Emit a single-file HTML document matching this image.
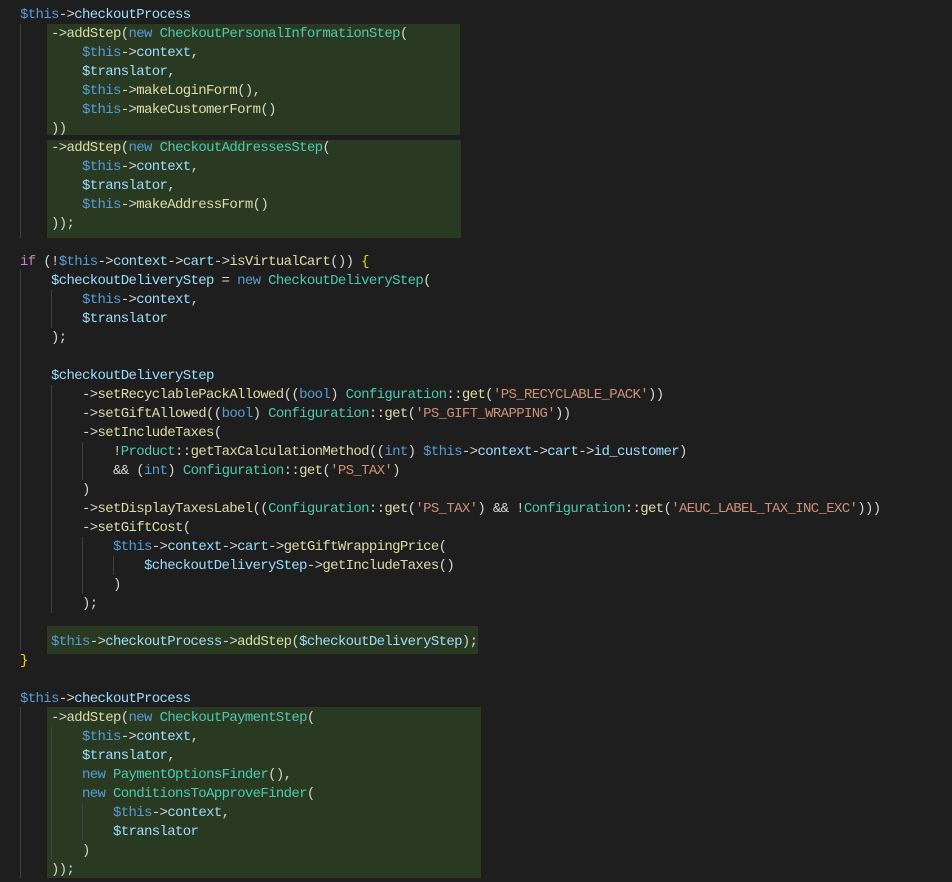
<!DOCTYPE html>
<html><head><meta charset="utf-8"><style>
html,body{margin:0;padding:0;background:#1e1e1e;width:952px;height:882px;overflow:hidden}
#c{position:absolute;left:20px;top:6px;font-family:"Liberation Mono",monospace;font-size:14px;letter-spacing:-0.65px;line-height:19px;color:#d4d4d4;white-space:pre}
.l{height:19px}
.hl{position:absolute;background:#2a3a22}
.g{position:absolute;width:1px;background:#404040}
.v{color:#569cd6}.k{color:#569cd6}.p{color:#9cdcfe}.f{color:#dcdcaa}.t{color:#4ec9b0}.s{color:#ce9178}.i{color:#c586c0}.y{color:#ffd700}
</style></head><body>
<div class="hl" style="left:47px;top:24px;width:413px;height:111px"></div>
<div class="hl" style="left:47px;top:140px;width:414px;height:98px"></div>
<div class="hl" style="left:47px;top:626px;width:431px;height:28px"></div>
<div class="hl" style="left:47px;top:707px;width:434px;height:171px"></div>
<div class="g" style="left:20px;top:24px;height:214px"></div>
<div class="g" style="left:20px;top:270px;height:380px"></div>
<div class="g" style="left:20px;top:707px;height:171px"></div>
<div class="g" style="left:51px;top:290px;height:38px"></div>
<div class="g" style="left:51px;top:385px;height:228px"></div>
<div class="g" style="left:51px;top:727px;height:133px"></div>
<div class="g" style="left:82px;top:442px;height:38px"></div>
<div class="g" style="left:82px;top:537px;height:57px"></div>
<div class="g" style="left:113px;top:556px;height:19px"></div>
<div class="g" style="left:82px;top:803px;height:38px"></div>
<div id="c"><div class="l"><span class="v">$this</span>-&gt;<span class="p">checkoutProcess</span></div><div class="l">    -&gt;<span class="f">addStep</span>(<span class="k">new</span> <span class="t">CheckoutPersonalInformationStep</span>(</div><div class="l">        <span class="v">$this</span>-&gt;<span class="p">context</span>,</div><div class="l">        <span class="p">$translator</span>,</div><div class="l">        <span class="v">$this</span>-&gt;<span class="f">makeLoginForm</span>(),</div><div class="l">        <span class="v">$this</span>-&gt;<span class="f">makeCustomerForm</span>()</div><div class="l">    ))</div><div class="l">    -&gt;<span class="f">addStep</span>(<span class="k">new</span> <span class="t">CheckoutAddressesStep</span>(</div><div class="l">        <span class="v">$this</span>-&gt;<span class="p">context</span>,</div><div class="l">        <span class="p">$translator</span>,</div><div class="l">        <span class="v">$this</span>-&gt;<span class="f">makeAddressForm</span>()</div><div class="l">    ));</div><div class="l"> </div><div class="l"><span class="i">if</span> (!<span class="v">$this</span>-&gt;<span class="p">context</span>-&gt;<span class="p">cart</span>-&gt;<span class="f">isVirtualCart</span>()) <span class="y">{</span></div><div class="l">    <span class="p">$checkoutDeliveryStep</span> = <span class="k">new</span> <span class="t">CheckoutDeliveryStep</span>(</div><div class="l">        <span class="v">$this</span>-&gt;<span class="p">context</span>,</div><div class="l">        <span class="p">$translator</span></div><div class="l">    );</div><div class="l"> </div><div class="l">    <span class="p">$checkoutDeliveryStep</span></div><div class="l">        -&gt;<span class="f">setRecyclablePackAllowed</span>((<span class="k">bool</span>) <span class="t">Configuration</span>::<span class="f">get</span>(<span class="s">'PS_RECYCLABLE_PACK'</span>))</div><div class="l">        -&gt;<span class="f">setGiftAllowed</span>((<span class="k">bool</span>) <span class="t">Configuration</span>::<span class="f">get</span>(<span class="s">'PS_GIFT_WRAPPING'</span>))</div><div class="l">        -&gt;<span class="f">setIncludeTaxes</span>(</div><div class="l">            !<span class="t">Product</span>::<span class="f">getTaxCalculationMethod</span>((<span class="k">int</span>) <span class="v">$this</span>-&gt;<span class="p">context</span>-&gt;<span class="p">cart</span>-&gt;<span class="p">id_customer</span>)</div><div class="l">            &amp;&amp; (<span class="k">int</span>) <span class="t">Configuration</span>::<span class="f">get</span>(<span class="s">'PS_TAX'</span>)</div><div class="l">        )</div><div class="l">        -&gt;<span class="f">setDisplayTaxesLabel</span>((<span class="t">Configuration</span>::<span class="f">get</span>(<span class="s">'PS_TAX'</span>) &amp;&amp; !<span class="t">Configuration</span>::<span class="f">get</span>(<span class="s">'AEUC_LABEL_TAX_INC_EXC'</span>)))</div><div class="l">        -&gt;<span class="f">setGiftCost</span>(</div><div class="l">            <span class="v">$this</span>-&gt;<span class="p">context</span>-&gt;<span class="p">cart</span>-&gt;<span class="f">getGiftWrappingPrice</span>(</div><div class="l">                <span class="p">$checkoutDeliveryStep</span>-&gt;<span class="f">getIncludeTaxes</span>()</div><div class="l">            )</div><div class="l">        );</div><div class="l"> </div><div class="l">    <span class="v">$this</span>-&gt;<span class="p">checkoutProcess</span>-&gt;<span class="f">addStep</span>(<span class="p">$checkoutDeliveryStep</span>);</div><div class="l"><span class="y">}</span></div><div class="l"> </div><div class="l"><span class="v">$this</span>-&gt;<span class="p">checkoutProcess</span></div><div class="l">    -&gt;<span class="f">addStep</span>(<span class="k">new</span> <span class="t">CheckoutPaymentStep</span>(</div><div class="l">        <span class="v">$this</span>-&gt;<span class="p">context</span>,</div><div class="l">        <span class="p">$translator</span>,</div><div class="l">        <span class="k">new</span> <span class="t">PaymentOptionsFinder</span>(),</div><div class="l">        <span class="k">new</span> <span class="t">ConditionsToApproveFinder</span>(</div><div class="l">            <span class="v">$this</span>-&gt;<span class="p">context</span>,</div><div class="l">            <span class="p">$translator</span></div><div class="l">        )</div><div class="l">    ));</div></div>
</body></html>
